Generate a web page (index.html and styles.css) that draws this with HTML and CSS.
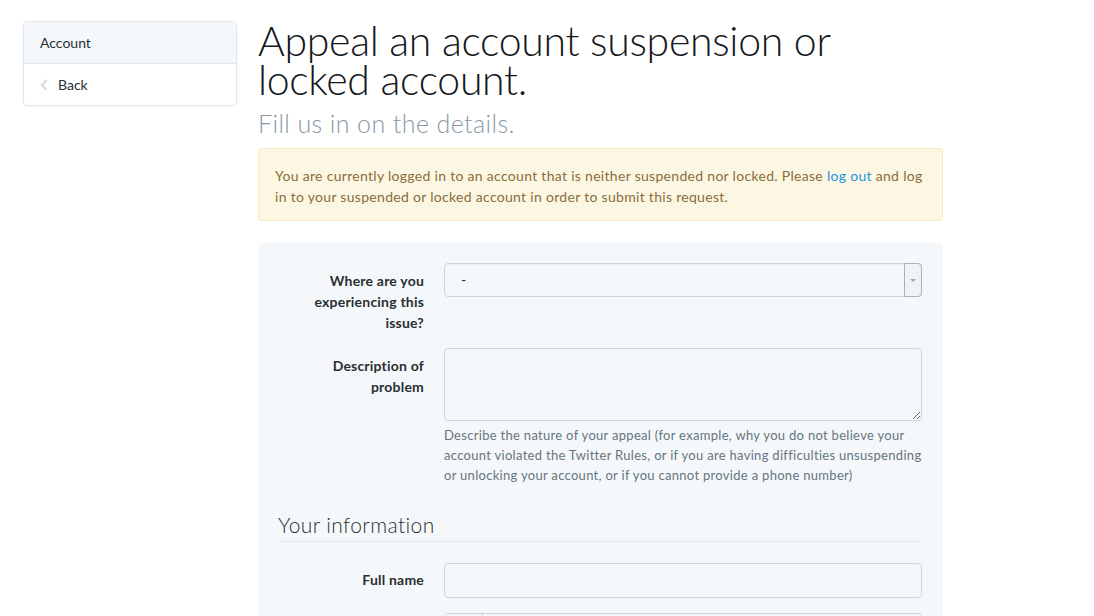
FILE: index.html
```html
<!DOCTYPE html>
<html lang="en">

<head>
    <meta charset="UTF-8">
    <meta name="viewport" content="width=device-width, initial-scale=1.0">
    <title>Appeal an account suspension or locked account</title>
    <link rel="stylesheet" href="styles.css">
</head>

<body>
    <div class="page">
        <aside class="sidebar">
            <div class="sidebar-title">Account</div>
            <a class="sidebar-back" href="#">
                <svg class="chevron" width="8" height="12" viewBox="0 0 8 12">
                    <path d="M6.5 1 L2 6 L6.5 11" fill="none" stroke="#d5dde3" stroke-width="2.2"/>
                </svg>
                Back
            </a>
        </aside>

        <main class="content">
            <h1>Appeal an account suspension or locked account.</h1>
            <p class="subtitle">Fill us in on the details.</p>

            <div class="alert">
                You are currently logged in to an account that is neither suspended nor locked. Please
                <a href="#">log out</a> and log in to your suspended or locked account in order to submit this request.
            </div>

            <form class="panel">
                <div class="form-row">
                    <label for="where">Where are you experiencing this issue?</label>
                    <div class="field">
                        <div class="select" id="where">
                            <span class="select-value">-</span>
                            <span class="select-arrow"></span>
                        </div>
                    </div>
                </div>

                <div class="form-row">
                    <label for="description">Description of problem</label>
                    <div class="field">
                        <textarea id="description"></textarea>
                        <p class="help">Describe the nature of your appeal (for example, why you do not believe your account violated the Twitter Rules, or if you are having difficulties unsuspending or unlocking your account, or if you cannot provide a phone number)</p>
                    </div>
                </div>

                <h2>Your information</h2>

                <div class="form-row">
                    <label class="single" for="fullname">Full name</label>
                    <div class="field">
                        <input type="text" id="fullname">
                    </div>
                </div>

                <div class="form-row">
                    <label class="single" for="username">Username</label>
                    <div class="field">
                        <div class="input-group">
                            <span class="addon">@</span>
                            <input type="text" id="username">
                        </div>
                    </div>
                </div>
            </form>
        </main>
    </div>
</body>

</html>
```

FILE: styles.css
```css
body {
    margin: 0;
    font-family: Lato, "Open Sans", Arial, sans-serif;
    color: #292f33;
    background: #fff;
}

a {
    color: #1b95e0;
    text-decoration: none;
}

.page {
    display: flex;
    align-items: flex-start;
    gap: 21px;
    padding: 21px 0 0 23px;
}

/* Sidebar */
.sidebar {
    width: 212px;
    border: 1px solid #e1e8ed;
    border-radius: 4px;
    box-shadow: 0 1px 2px rgba(0, 0, 0, 0.04);
    overflow: hidden;
    font-size: 14px;
}

.sidebar-title {
    height: 41px;
    line-height: 41px;
    padding: 0 16px;
    background: #f5f8fa;
    border-bottom: 1px solid #e1e8ed;
    color: #292f33;
}

.sidebar-back {
    display: flex;
    align-items: center;
    gap: 10px;
    height: 41px;
    padding: 0 16px;
    color: #292f33;
}

/* Main */
.content {
    width: 685px;
}

h1 {
    margin: 0;
    font-size: 41px;
    font-weight: 300;
    line-height: 39px;
    letter-spacing: -0.3px;
    color: #14171a;
}

.subtitle {
    margin: 8px 0 0;
    font-size: 25px;
    font-weight: 300;
    line-height: 32px;
    letter-spacing: 0.4px;
    color: #8899a6;
}

.alert {
    margin-top: 9px;
    padding: 16px 16px 13px;
    background: #fcf7e3;
    border: 1px solid #f8e9c1;
    border-radius: 3px;
    font-size: 14px;
    line-height: 21px;
    letter-spacing: 0.3px;
    color: #8a6d3b;
}

.panel {
    margin-top: 22px;
    padding: 20px 21px 40px 20px;
    background: #f5f8fa;
    border-radius: 5px;
}

.form-row {
    display: grid;
    grid-template-columns: 146px 1fr;
    column-gap: 20px;
    margin-bottom: 15px;
}

.form-row label {
    text-align: right;
    font-size: 14px;
    font-weight: 700;
    line-height: 21px;
    letter-spacing: 0.2px;
    padding-top: 7px;
    color: #292f33;
}

.form-row label.single {
    padding-top: 6px;
}

.select {
    display: flex;
    height: 32px;
    border: 1px solid #ccd6dd;
    border-radius: 4px;
    background: #f5f8fa;
    box-shadow: inset 0 1px 1px rgba(0, 0, 0, 0.03);
}

.select-value {
    flex: 1;
    padding: 0 16px;
    line-height: 32px;
    font-size: 14px;
}

.select-arrow {
    position: relative;
    width: 16px;
    margin: -1px -1px -1px 0;
    background: #f0f2f4;
    border: 1px solid #a8b2b9;
    border-radius: 0 4px 4px 0;
}

.select-arrow::after {
    content: "";
    position: absolute;
    left: 5px;
    top: 15px;
    border-left: 3px solid transparent;
    border-right: 3px solid transparent;
    border-top: 3px solid #a2a9af;
}

textarea,
input[type="text"] {
    display: block;
    width: 100%;
    box-sizing: border-box;
    border: 1px solid #ccd6dd;
    border-radius: 4px;
    background: #f5f8fa;
    font-family: inherit;
    font-size: 14px;
    margin: 0;
}

textarea {
    height: 73px;
    resize: vertical;
}

input[type="text"] {
    height: 35px;
}

.help {
    margin: 4px 0 0;
    font-size: 13px;
    line-height: 20px;
    letter-spacing: 0.3px;
    color: #66757f;
}

h2 {
    margin: 27px 0 21px;
    padding-bottom: 3px;
    border-bottom: 1px solid #e1e8ed;
    font-size: 21px;
    font-weight: 300;
    line-height: 26px;
    letter-spacing: 0.4px;
    color: #292f33;
}

.input-group {
    display: flex;
    height: 35px;
    border: 1px solid #ccd6dd;
    border-radius: 4px;
    overflow: hidden;
}

.input-group .addon {
    width: 37px;
    border-right: 1px solid #ccd6dd;
    background: #f5f8fa;
    text-align: center;
    line-height: 33px;
    font-size: 14px;
    color: #66757f;
}

.input-group input[type="text"] {
    flex: 1;
    height: 33px;
    border: 0;
    border-radius: 0;
}
```
